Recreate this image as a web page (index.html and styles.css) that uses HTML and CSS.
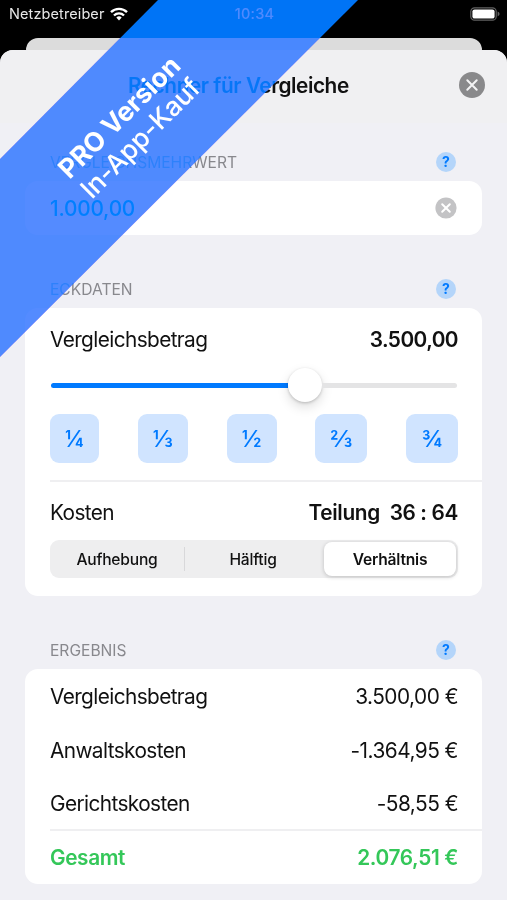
FILE: index.html
```html
<!DOCTYPE html>
<html lang="de">
<head>
<meta charset="utf-8">
<meta name="viewport" content="width=device-width, initial-scale=1">
<title>Rechner für Vergleiche</title>
<link rel="stylesheet" href="styles.css">
</head>
<body>
<div class="phone">
  <header class="status">
    <div class="carrier"><span>Netzbetreiber</span>
      <svg class="wifi" viewBox="0 0 18 14" width="18" height="14"><g fill="none" stroke="#fff" stroke-width="2.4"><path d="M1 5.2a11.4 11.4 0 0 1 16 0"/><path d="M4 8.5a7 7 0 0 1 10 0"/></g><path fill="#fff" d="M9 13.4 6.3 10.6a3.8 3.8 0 0 1 5.4 0z"/></svg>
    </div>
    <time class="clock">10:34</time>
    <svg class="battery" viewBox="0 0 30 14" width="30" height="14"><rect x=".8" y=".8" width="25.4" height="12.4" rx="3.8" fill="none" stroke="#626262" stroke-width="1.2"/><rect x="2.4" y="2.4" width="22.2" height="9.2" rx="2.2" fill="#fff"/><path d="M27.6 4.6q2 1 2 2.4t-2 2.4z" fill="#626262"/></svg>
  </header>
  <div class="back-sheet"></div>
  <main class="sheet">
    <div class="titlebar">
      <h1>Rechner für Vergleiche</h1>
      <svg class="close" viewBox="0 0 26 26" width="26" height="26"><circle cx="13" cy="13" r="13" fill="#89898b"/><path d="m8.3 8.3 9.4 9.4m0-9.4-9.4 9.4" stroke="#f3f3f4" stroke-width="2" stroke-linecap="round"/></svg>
    </div>
    <section class="group first">
      <div class="group-head"><h2 class="wide">VERGLEICHSMEHRWERT</h2><span class="help">?</span></div>
      <div class="card row input">
        <span class="entry">1.000,00</span>
        <svg viewBox="0 0 22 22" width="22" height="22"><circle cx="11" cy="11" r="10.6" fill="#c3c3c5"/><path d="m7.2 7.2 7.6 7.6m0-7.6-7.6 7.6" stroke="#fff" stroke-width="2" stroke-linecap="round"/></svg>
      </div>
    </section>
    <section class="group second">
      <div class="group-head"><h2>ECKDATEN</h2><span class="help">?</span></div>
      <div class="card data">
        <div class="row amount"><span class="label">Vergleichsbetrag</span><span class="strong">3.500,00</span></div>
        <div class="slider"><span class="fill"></span><span class="thumb"></span><span class="rest"></span></div>
        <div class="fractions">
          <button class="f14">¼</button><button class="f13">⅓</button><button class="f12">½</button><button class="f23">⅔</button><button class="f34">¾</button>
        </div>
        <hr>
        <div class="row costs"><span class="label">Kosten</span><span class="strong split">Teilung&nbsp; 36 : 64</span></div>
        <div class="segments"><span>Aufhebung</span><i></i><span>Hälftig</span><span class="selected">Verhältnis</span></div>
      </div>
    </section>
    <section class="group third">
      <div class="group-head"><h2>ERGEBNIS</h2><span class="help">?</span></div>
      <div class="card">
        <div class="row result"><span class="label">Vergleichsbetrag</span><span>3.500,00 €</span></div>
        <div class="row result"><span class="label">Anwaltskosten</span><span>-1.364,95 €</span></div>
        <div class="row result last"><span class="label">Gerichtskosten</span><span>-58,55 €</span></div>
        <hr>
        <div class="row result total"><span>Gesamt</span><span>2.076,51 €</span></div>
      </div>
    </section>
  </main>
  <div class="ribbon ribbon-shade"></div>
  <div class="ribbon ribbon-tint"></div>
  <div class="ribbon-text"><strong>PRO Version</strong><span>In-App-Kauf</span></div>
</div>
</body>
</html>
```
FILE: styles.css
```css
* { box-sizing: border-box; }
body { margin: 0; background: #000; font-family: Inter, "Liberation Sans", sans-serif; color: #111; }
.phone { position: relative; width: 507px; height: 900px; overflow: hidden; background: #000; isolation: isolate; }
.status { height: 38px; padding: 0 7px 11px 9px; display: grid; grid-template-columns: 1fr auto 1fr; align-items: center; color: #e8e8e8; font-size: 14.5px; }
.carrier { display: flex; align-items: center; gap: 6px; letter-spacing: .1px; }
.clock { font-weight: 500; letter-spacing: .2px; color: #eee; }
.battery { justify-self: end; }
.back-sheet { height: 12px; margin: 0 25px 0 26px; border-radius: 12px 12px 0 0; background: #dcdcdc; }
.sheet { height: 850px; border-radius: 13px 13px 0 0; background: #f0f0f5; overflow: hidden; }
.titlebar { height: 73px; padding: 0 22px 3px 128px; display: flex; align-items: center; justify-content: space-between; background: #f0f0f2; }
h1 { margin: 0; font-size: 20.8px; font-weight: 600; letter-spacing: -.45px; white-space: nowrap; }
.group-head { display: flex; align-items: center; justify-content: space-between; height: 22px; margin-bottom: 8px; padding: 0 51px 0 50px; }
.first { padding-top: 28px; }
.second { padding-top: 43px; }
.third { padding-top: 43px; }
h2 { margin: 0; font-size: 15.6px; font-weight: 400; color: #88888d; letter-spacing: 0; }
.help { width: 20px; height: 20px; border-radius: 50%; background: #b4d5fa; color: #007aff; font-size: 14px; font-weight: 700; line-height: 20px; text-align: center; }
.card { margin: 0 25px; padding-left: 25px; border-radius: 13px; background: #fff; }
.data { padding-bottom: 18px; }
.row { display: flex; align-items: center; justify-content: space-between; padding-right: 24px; font-size: 20.8px; white-space: nowrap; letter-spacing: -.6px; }
.result > span:last-child { letter-spacing: -.5px; }
.input { height: 54px; padding-right: 25px; letter-spacing: -.2px; }
.entry { color: #007aff; font-weight: 500; }
.amount { height: 62px; }
.strong { font-weight: 600; letter-spacing: -.55px; }
.split { letter-spacing: -.35px; }
.slider { display: flex; align-items: center; height: 34px; margin: -2px 25px 0 1px; }
.fill, .rest { height: 5px; background: #007aff; border-radius: 3px 0 0 3px; }
.fill { width: 237px; }
.rest { flex: 1; background: #e4e4e5; border-radius: 0 3px 3px 0; }
.thumb { width: 34px; height: 34px; border-radius: 50%; background: #fff; box-shadow: 0 1px 3px #0003, 0 5px 12px #0002; }
.fractions { display: flex; justify-content: space-between; margin: 12px 24px 17px 0; }
button { height: 49px; padding: 0; border: 0; border-radius: 9px; background: #d0e4ff; color: #007aff; font: 500 23px Inter, sans-serif; }
.f14 { width: 49px; }
.f13, .f12 { width: 50px; }
.f23, .f34 { width: 52px; }
hr { height: 2px; margin: 0; border: 0; background: #efeff1; }
.costs { height: 58px; padding-top: 3px; }
.segments { display: grid; grid-template-columns: 134px 1px 139px 132px; align-items: center; width: 408px; height: 38px; border-radius: 9px; background: #eeeeef; font-size: 15.6px; font-weight: 500; text-align: center; letter-spacing: -.2px; }
.segments span:nth-of-type(2) { padding-right: 3px; }
.segments i { height: 24px; background: #d8d8da; }
.segments .selected { height: 34px; line-height: 35px; border-radius: 8px; background: #fff; font-weight: 600; letter-spacing: -.2px; box-shadow: 0 1px 4px #0003; }
.result { height: 54px; }
.result.last { height: 52px; }
.result.total { height: 53px; color: #34c759; font-weight: 600; letter-spacing: -.38px; }
.total > span:last-child { letter-spacing: -.35px; }
.ribbon { position: absolute; inset: 0; clip-path: polygon(158px 0, 358px 0, 0 357px, 0 159px); }
.ribbon-shade { background: rgb(84, 42, 250); mix-blend-mode: multiply; }
.ribbon-tint { background: rgb(0, 116, 246); mix-blend-mode: screen; }
.ribbon-text { position: absolute; left: 30px; top: 97px; width: 200px; height: 62px; color: #fff; font-size: 26.6px; line-height: 30px; text-align: center; transform: rotate(-45deg); white-space: nowrap; }
.ribbon-text strong, .ribbon-text span { display: block; }
.ribbon-text strong { letter-spacing: -.2px; }
.ribbon-text span { font-weight: 500; letter-spacing: -.2px; }
```
